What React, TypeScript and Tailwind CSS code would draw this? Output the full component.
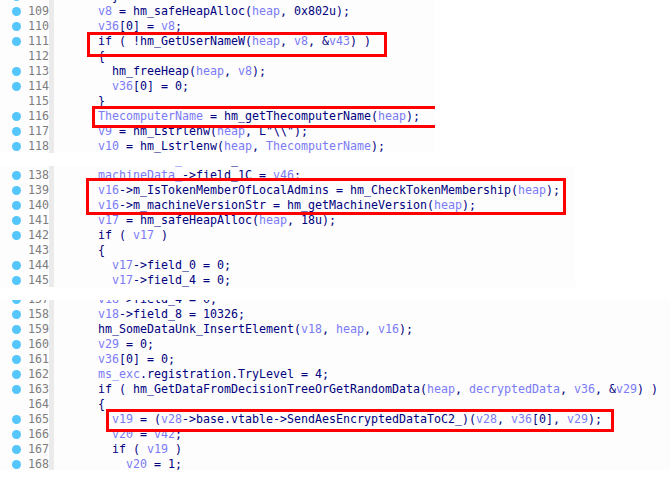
import React from "react";

type Line = { n: number; code: string; dot?: boolean };

const VARS = new Set([
  "v8", "v9", "v10", "v16", "v17", "v18", "v19", "v20", "v28", "v29", "v36", "v42",
  "v43", "v45", "v46", "heap", "ThecomputerName", "machineData_", "ms_exc", "decryptedData",
]);

const panels: { top: number; height: number; shift: number; width: string; lines: Line[]; boxes: { l: number; t: number; w: number; h: number }[] }[] = [
  {
    top: 0,
    height: 153,
    shift: -11,
    width: "w-[435px]",
    lines: [
      { n: 108, code: "  }" },
      { n: 109, code: "v8 = hm_safeHeapAlloc(heap, 0x802u);" },
      { n: 110, code: "v36[0] = v8;" },
      { n: 111, code: "if ( !hm_GetUserNameW(heap, v8, &v43) )" },
      { n: 112, code: "{", dot: false },
      { n: 113, code: "  hm_freeHeap(heap, v8);" },
      { n: 114, code: "  v36[0] = 0;" },
      { n: 115, code: "}", dot: false },
      { n: 116, code: "ThecomputerName = hm_getThecomputerName(heap);" },
      { n: 117, code: 'v9 = hm_Lstrlenw(heap, L"\\\\");' },
      { n: 118, code: "v10 = hm_Lstrlenw(heap, ThecomputerName);" },
    ],
    boxes: [
      { l: 87, t: 32, w: 300, h: 25 },
      { l: 92, t: 106, w: 346, h: 22 },
    ],
  },
  {
    top: 13,
    height: 121,
    shift: -13,
    width: "w-[575px]",
    lines: [
      { n: 137, code: "machineData_->field_18 = v45;" },
      { n: 138, code: "machineData_->field_1C = v46;" },
      { n: 139, code: "v16->m_IsTokenMemberOfLocalAdmins = hm_CheckTokenMembership(heap);" },
      { n: 140, code: "v16->m_machineVersionStr = hm_getMachineVersion(heap);" },
      { n: 141, code: "v17 = hm_safeHeapAlloc(heap, 18u);" },
      { n: 142, code: "if ( v17 )" },
      { n: 143, code: "{", dot: false },
      { n: 144, code: "  v17->field_0 = 0;" },
      { n: 145, code: "  v17->field_4 = 0;" },
    ],
    boxes: [{ l: 86, t: 12, w: 480, h: 37 }],
  },
  {
    top: 13,
    height: 170,
    shift: -8,
    width: "w-full",
    lines: [
      { n: 157, code: "v18->field_4 = 0;" },
      { n: 158, code: "v18->field_8 = 10326;" },
      { n: 159, code: "hm_SomeDataUnk_InsertElement(v18, heap, v16);" },
      { n: 160, code: "v29 = 0;" },
      { n: 161, code: "v36[0] = 0;" },
      { n: 162, code: "ms_exc.registration.TryLevel = 4;" },
      { n: 163, code: "if ( hm_GetDataFromDecisionTreeOrGetRandomData(heap, decryptedData, v36, &v29) )" },
      { n: 164, code: "{", dot: false },
      { n: 165, code: "  v19 = (v28->base.vtable->SendAesEncryptedDataToC2_)(v28, v36[0], v29);" },
      { n: 166, code: "  v20 = v42;" },
      { n: 167, code: "  if ( v19 )" },
      { n: 168, code: "    v20 = 1;" },
    ],
    boxes: [{ l: 106, t: 109, w: 508, h: 23 }],
  },
];

const Code = ({ text }: { text: string }) => {
  const parts = text.split(/([A-Za-z_][A-Za-z0-9_]*)/);
  return (
    <>
      {parts.map((p, i) =>
        VARS.has(p) ? (
          <span key={i} className="text-[#7b7bf5]">{p}</span>
        ) : (
          <span key={i}>{p}</span>
        )
      )}
    </>
  );
};

const Row = ({ line }: { line: Line }) => (
  <div className="flex h-[15px] items-center leading-[15px]">
    <div className="flex w-[49px] items-center pl-[12px]">
      <div className={`h-[9px] w-[9px] rounded-full ${line.dot === false ? "" : "bg-[#55c6fb]"}`} />
      <div className="ml-[7px] w-[21px] text-right text-[#7d7d7d]">{line.n}</div>
    </div>
    <div className="h-full w-[5px] bg-[#ebebeb]" />
    <div className="whitespace-pre pl-[44px] text-[#000080]">
      <Code text={line.code} />
    </div>
  </div>
);

export default function App() {
  return (
    <div className="h-[479px] w-[670px] overflow-hidden bg-white font-['DejaVu_Sans_Mono',monospace] text-[11.63px]">
      {panels.map((p, i) => (
        <div
          key={i}
          className={`relative overflow-hidden bg-[#fdfdfd] ${p.width}`}
          style={{ height: p.height, marginTop: p.top }}
        >
          <div style={{ marginTop: p.shift }}>
            {p.lines.map((l) => (
              <Row key={l.n} line={l} />
            ))}
          </div>
          {p.boxes.map((b, j) => (
            <div
              key={j}
              className="absolute border-[3px] border-[#ff0000]"
              style={{ left: b.l, top: b.t, width: b.w, height: b.h }}
            />
          ))}
        </div>
      ))}
    </div>
  );
}
